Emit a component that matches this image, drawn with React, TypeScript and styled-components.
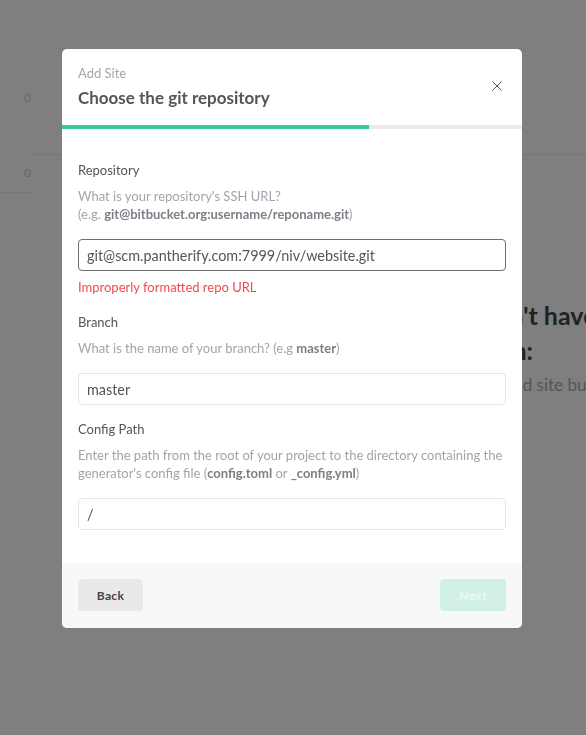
import React, { useState, ChangeEvent } from "react";
import styled, { createGlobalStyle } from "styled-components";

const GlobalStyle = createGlobalStyle`
    html, body {
        margin: 0;
        padding: 0;
        height: 100%;
        overflow: hidden;
        background: #fff;
        font-family: Lato, "Noto Sans", sans-serif;
    }
    * { box-sizing: border-box; }
`

const Page = styled.div`
    display: flex;
    width: 100%;
    height: 735px;
    overflow: hidden;
`
const Stats = styled.div`
    width: 32px;
    flex-shrink: 0;
    padding-top: 90px;
    display: flex;
    flex-direction: column;
`
const Stat = styled.div<{ $h: number; $line?: boolean }>`
    height: ${p => p.$h}px;
    text-align: right;
    padding-right: 1px;
    font-size: 12px;
    line-height: 16px;
    color: #d0d0d0;
    border-bottom: ${p => p.$line ? "1px solid #ececec" : "none"};
`
const Main = styled.div`
    flex: 1;
    min-width: 0;
    display: flex;
    flex-direction: column;
`
const TopBar = styled.div`
    height: 155px;
    flex-shrink: 0;
    border-bottom: 1px solid #ececec;
`
const Empty = styled.div`
    padding-top: 143px;
    padding-left: 401px;
    white-space: nowrap;
`
const EmptyTitle = styled.h2`
    margin: 0;
    font-size: 25px;
    line-height: 35px;
    font-weight: 700;
    color: #444;
`
const EmptyText = styled.p`
    margin: 6px 0 0;
    font-size: 17px;
    color: #ababab;
`

const Overlay = styled.div`
    position: fixed;
    inset: 0;
    background: rgba(0, 0, 0, 0.5);
    display: flex;
    justify-content: center;
    align-items: flex-start;
    padding: 49px 2px 0 0;
`
const Modal = styled.div`
    width: 460px;
    background: #fff;
    border-radius: 5px;
    overflow: hidden;
    display: flex;
    flex-direction: column;
`
const Header = styled.div`
    display: flex;
    justify-content: space-between;
    align-items: flex-start;
    padding: 16px 16px 0 16px;
    height: 76px;
`
const Kicker = styled.div`
    font-size: 13px;
    color: #a3a6ab;
    line-height: 16px;
`
const Title = styled.h1`
    margin: 6px 0 0;
    font-size: 17px;
    line-height: 22px;
    font-weight: 700;
    color: #555;
`
const Close = styled.button`
    border: none;
    background: none;
    padding: 0;
    margin: 16px 4px 0 0;
    width: 10px;
    height: 10px;
    cursor: pointer;
    display: flex;
`
const Progress = styled.div`
    height: 4px;
    background: #ebebeb;
`
const ProgressFill = styled.div`
    height: 100%;
    background: #3dc795;
`
const Body = styled.div`
    padding: 33px 16px 33px;
    display: flex;
    flex-direction: column;
`
const Field = styled.div<{ $gap?: number }>`
    display: flex;
    flex-direction: column;
    margin-bottom: ${p => p.$gap ?? 0}px;
`
const Label = styled.div`
    font-size: 13px;
    line-height: 16px;
    color: #555;
    margin-bottom: 9px;
`
const Help = styled.div`
    font-size: 13px;
    line-height: 18px;
    color: #a1a5ab;
    margin-bottom: 16px;
    b { color: #7b7f86; font-weight: 700; }
`
const Input = styled.input<{ $focus?: boolean }>`
    height: 32px;
    width: 100%;
    border: 1px solid ${p => p.$focus ? "#6f6f6f" : "#e6e6e6"};
    border-radius: 4px;
    padding: 0 8px;
    font-family: inherit;
    font-size: 14.4px;
    color: #555;
    outline: none;
`
const Error = styled.div`
    font-size: 13px;
    line-height: 16px;
    color: #ef4b55;
    margin-top: 8px;
`
const Footer = styled.div`
    background: #f7f8fa;
    padding: 16px 16px 17px;
    display: flex;
    justify-content: space-between;
`
const Button = styled.button<{ $primary?: boolean }>`
    height: 32px;
    width: ${p => p.$primary ? "66px" : "65px"};
    border: none;
    border-radius: 4px;
    font-family: inherit;
    font-size: 12px;
    font-weight: 700;
    letter-spacing: 0.3px;
    cursor: pointer;
    background: ${p => p.$primary ? "#d0f1e4" : "#e9e9e9"};
    color: ${p => p.$primary ? "#edfaf5" : "#444"};
`

const App = () => {
    const [repo, setRepo] = useState("git@scm.pantherify.com:7999/niv/website.git")
    const [branch, setBranch] = useState("master")
    const [path, setPath] = useState("/")

    return (
        <>
            <GlobalStyle />
            <Page>
                <Stats>
                    <Stat $h={75}>0</Stat>
                    <Stat $h={28} $line>0</Stat>
                </Stats>
                <Main>
                    <TopBar />
                    <Empty>
                        <EmptyTitle>You don't have any sites yet</EmptyTitle>
                        <EmptyTitle>To begin:</EmptyTitle>
                        <EmptyText>Click the Add site button to connect a repo</EmptyText>
                    </Empty>
                </Main>
            </Page>
            <Overlay>
                <Modal>
                    <Header>
                        <div>
                            <Kicker>Add Site</Kicker>
                            <Title>Choose the git repository</Title>
                        </div>
                        <Close aria-label="Close">
                            <svg width="10" height="10" viewBox="0 0 10 10">
                                <path d="M0.5 0.5L9.5 9.5M9.5 0.5L0.5 9.5" stroke="#555" strokeWidth="1" />
                            </svg>
                        </Close>
                    </Header>
                    <Progress>
                        <ProgressFill style={{ width: `${(2 / 3) * 100}%` }} />
                    </Progress>
                    <Body>
                        <Field $gap={19}>
                            <Label>Repository</Label>
                            <Help>
                                What is your repository's SSH URL?<br />
                                (e.g. <b>git@bitbucket.org:username/reponame.git</b>)
                            </Help>
                            <Input $focus value={repo} onChange={(e: ChangeEvent<HTMLInputElement>) => setRepo(e.target.value)} />
                            <Error>Improperly formatted repo URL</Error>
                        </Field>
                        <Field $gap={16}>
                            <Label>Branch</Label>
                            <Help>What is the name of your branch? (e.g <b>master</b>)</Help>
                            <Input value={branch} onChange={(e: ChangeEvent<HTMLInputElement>) => setBranch(e.target.value)} />
                        </Field>
                        <Field>
                            <Label>Config Path</Label>
                            <Help>
                                Enter the path from the root of your project to the directory containing the
                                generator's config file (<b>config.toml</b> or <b>_config.yml</b>)
                            </Help>
                            <Input value={path} onChange={(e: ChangeEvent<HTMLInputElement>) => setPath(e.target.value)} />
                        </Field>
                    </Body>
                    <Footer>
                        <Button>Back</Button>
                        <Button $primary disabled>Next</Button>
                    </Footer>
                </Modal>
            </Overlay>
        </>
    )
}

export default App;
